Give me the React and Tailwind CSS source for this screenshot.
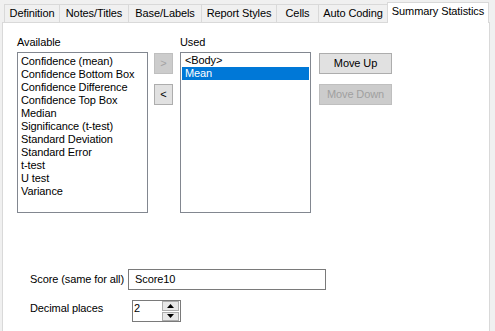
import React from 'react';

const tabs = [
  { label: 'Definition', w: 'w-[55px]' },
  { label: 'Notes/Titles', w: 'w-[69px]' },
  { label: 'Base/Labels', w: 'w-[73px]' },
  { label: 'Report Styles', w: 'w-[75px]' },
  { label: 'Cells', w: 'w-[42px]' },
  { label: 'Auto Coding', w: 'w-[69px]' },
];

const available = [
  'Confidence (mean)',
  'Confidence Bottom Box',
  'Confidence Difference',
  'Confidence Top Box',
  'Median',
  'Significance (t-test)',
  'Standard Deviation',
  'Standard Error',
  't-test',
  'U test',
  'Variance',
];

const used = ['<Body>', 'Mean'];

const Arrow = ({ down }) => (
  <svg width="7" height="4" viewBox="0 0 7 4" className="block">
    {down ? <path d="M0 0h7L3.5 4z" fill="#000" /> : <path d="M0 4h7L3.5 0z" fill="#000" />}
  </svg>
);

export default function App() {
  return (
    <div className="w-[495px] h-[331px] overflow-hidden bg-[#f0f0f0] pl-[2px] pt-[2px] text-[11px] leading-[13px] tracking-[-0.1px] text-black font-['Liberation_Sans',Arial,sans-serif]">
      {/* Tab strip */}
      <div className="flex items-end h-[20px] pl-[2px]">
        {tabs.map((t) => (
          <div
            key={t.label}
            className={`${t.w} h-[18px] shrink-0 border-t border-l border-[#d9d9d9] bg-[#f0f0f0] pt-[2px] text-center whitespace-nowrap`}
          >
            {t.label}
          </div>
        ))}
        <div className="relative z-10 w-[102px] h-[21px] -mb-px shrink-0 border-t border-l border-r border-[#d9d9d9] bg-white pt-[2px] text-center whitespace-nowrap">
          Summary Statistics
        </div>
      </div>

      {/* Page */}
      <div className="w-[488px] h-[320px] border border-[#d9d9d9] bg-white pl-[14px] pt-[13px]">
        <div className="flex items-start">
          {/* Available */}
          <div className="w-[131px]">
            <div>Available</div>
            <div className="mt-[3px] h-[161px] border border-[#828790] px-px pt-[2px]">
              {available.map((a) => (
                <div key={a} className="pl-[2px] whitespace-nowrap">{a}</div>
              ))}
            </div>
          </div>

          {/* Transfer buttons */}
          <div className="ml-[6px] mt-[17px] flex flex-col gap-[10px]">
            <div className="w-[19px] h-[21px] border border-[#bfbfbf] bg-[#cccccc] text-[#a3a3a3] flex items-center justify-center">&gt;</div>
            <div className="w-[19px] h-[21px] border border-[#adadad] bg-[#e1e1e1] flex items-center justify-center">&lt;</div>
          </div>

          {/* Used */}
          <div className="ml-[7px] w-[131px]">
            <div>Used</div>
            <div className="mt-[3px] h-[161px] border border-[#828790] px-px pt-px">
              {used.map((u, i) => (
                <div
                  key={u}
                  className={i === 1 ? 'h-[13px] pl-[3px] bg-[#0078d7] text-white' : 'h-[13px] pl-[3px]'}
                >
                  {u}
                </div>
              ))}
            </div>
          </div>

          {/* Move buttons */}
          <div className="ml-[8px] mt-[17px] flex flex-col gap-[10px]">
            <div className="w-[73px] h-[21px] border border-[#adadad] bg-[#e1e1e1] flex items-center justify-center">Move Up</div>
            <div className="w-[73px] h-[21px] border border-[#bfbfbf] bg-[#cccccc] text-[#a0a0a0] flex items-center justify-center">Move Down</div>
          </div>
        </div>

        {/* Score */}
        <div className="mt-[56px] ml-[13px] flex items-center">
          <div className="w-[98px] whitespace-nowrap">Score (same for all)</div>
          <div className="w-[198px] h-[21px] border border-[#7a7a7a] pl-[6px] flex items-center">Score10</div>
        </div>

        {/* Decimal places */}
        <div className="mt-[10px] ml-[13px] flex items-start">
          <div className="w-[102px] pt-[2px] whitespace-nowrap">Decimal places</div>
          <div className="w-[49px] h-[22px] border border-[#7a7a7a] flex">
            <div className="flex-1 pl-[1px] pt-[1px]">2</div>
            <div className="w-[18px] flex flex-col gap-px pr-px">
              <div className="h-[10px] border border-[#adadad] bg-[#e8e8e8] flex items-center justify-center"><Arrow /></div>
              <div className="h-[10px] border border-[#adadad] bg-[#e8e8e8] flex items-center justify-center"><Arrow down /></div>
            </div>
          </div>
        </div>
      </div>
    </div>
  );
}
